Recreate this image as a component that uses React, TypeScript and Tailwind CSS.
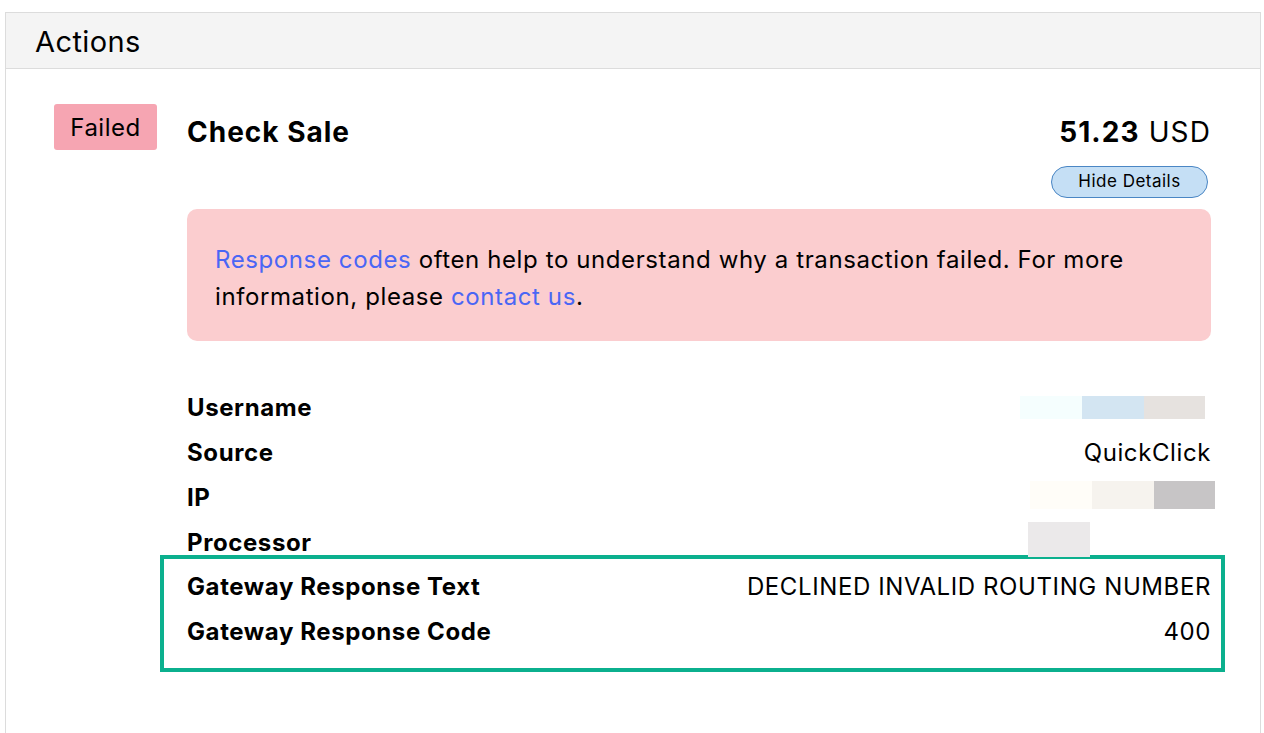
import React from 'react';

const font = { fontFamily: 'Inter, "Noto Sans", Arial, sans-serif' };

const rows: { label: string; value: React.ReactNode }[] = [
  {
    label: 'Username',
    value: (
      <div className="flex h-[23px] mr-[6px]">
        <div className="w-[62px] bg-[#f5fefe]" />
        <div className="w-[62px] bg-[#d3e5f2]" />
        <div className="w-[61px] bg-[#e6e2df]" />
      </div>
    ),
  },
  { label: 'Source', value: 'QuickClick' },
  {
    label: 'IP',
    value: (
      <div className="flex h-[28px] -mr-[4px] -mt-[6px]">
        <div className="w-[62px] bg-[#fffdf8]" />
        <div className="w-[62px] bg-[#f6f3ee]" />
        <div className="w-[61px] bg-[#c7c5c6]" />
      </div>
    ),
  },
  {
    label: 'Processor',
    value: <div className="h-[35px] w-[62px] bg-[#ebe9ea] mr-[121px] -mt-[6px]" />,
  },
];

const gatewayRows = [
  { label: 'Gateway Response Text', value: 'DECLINED INVALID ROUTING NUMBER' },
  { label: 'Gateway Response Code', value: '400' },
];

function Row({ label, value }: { label: string; value: React.ReactNode }) {
  return (
    <div className="flex items-center justify-between h-[45px] text-[24px] tracking-[0.6px] text-black">
      <span className="font-bold">{label}</span>
      <span>{value}</span>
    </div>
  );
}

export default function App() {
  return (
    <div className="min-h-screen bg-white pt-[12px] pl-[5px] pr-[3px]" style={font}>
      <div className="border border-[#dcdcdc] border-b-0 min-h-[721px]">
        {/* Header */}
        <div className="h-[56px] bg-[#f4f4f4] border-b border-[#dcdcdc] flex items-center px-[29px] pt-[3px]">
          <h2 className="text-[29px] tracking-[0.4px] text-black">Actions</h2>
        </div>

        {/* Body */}
        <div className="flex pl-[48px] pr-[49px] pt-[35px]">
          <div className="w-[103px] h-[46px] shrink-0 bg-[#f6a5b2] rounded-[3px] flex items-center justify-center pt-[2px] text-[24px] tracking-[0.5px] text-black">
            Failed
          </div>

          <div className="flex-1 ml-[30px]">
            <div className="flex items-center justify-between h-[56px]">
              <h3 className="text-[28px] tracking-[1px] font-bold text-black">Check Sale</h3>
              <div className="text-[28px] tracking-[1.1px] text-black">
                <span className="font-bold">51.23</span> USD
              </div>
            </div>
            <div className="flex justify-end mt-[6px] pr-[3px]">
              <button className="w-[157px] h-[32px] rounded-full bg-[#c5dff5] border border-[#4a86c4] text-[17px] tracking-[0.5px] text-black">
                Hide Details
              </button>
            </div>

            <div className="mt-[11px] bg-[#fbcdcf] rounded-[10px] pt-[32px] pb-[26px] px-[28px] text-[24px] tracking-[0.6px] leading-[37px] text-black">
              <p>
                <a className="text-[#4a66f5]">Response codes</a> often help to understand why a transaction failed. For more
                information, please <a className="text-[#4a66f5]">contact us</a>.
              </p>
            </div>

            <div className="mt-[44px]">
              {rows.map((r) => (
                <Row key={r.label} label={r.label} value={r.value} />
              ))}
              <div className="-ml-[27px] -mr-[14px] -mt-[10px] border-4 border-[#0bb08e] pl-[23px] pr-[10px] pt-[5px] pb-[14px]">
                {gatewayRows.map((r) => (
                  <Row key={r.label} label={r.label} value={r.value} />
                ))}
              </div>
            </div>
          </div>
        </div>
      </div>
    </div>
  );
}
